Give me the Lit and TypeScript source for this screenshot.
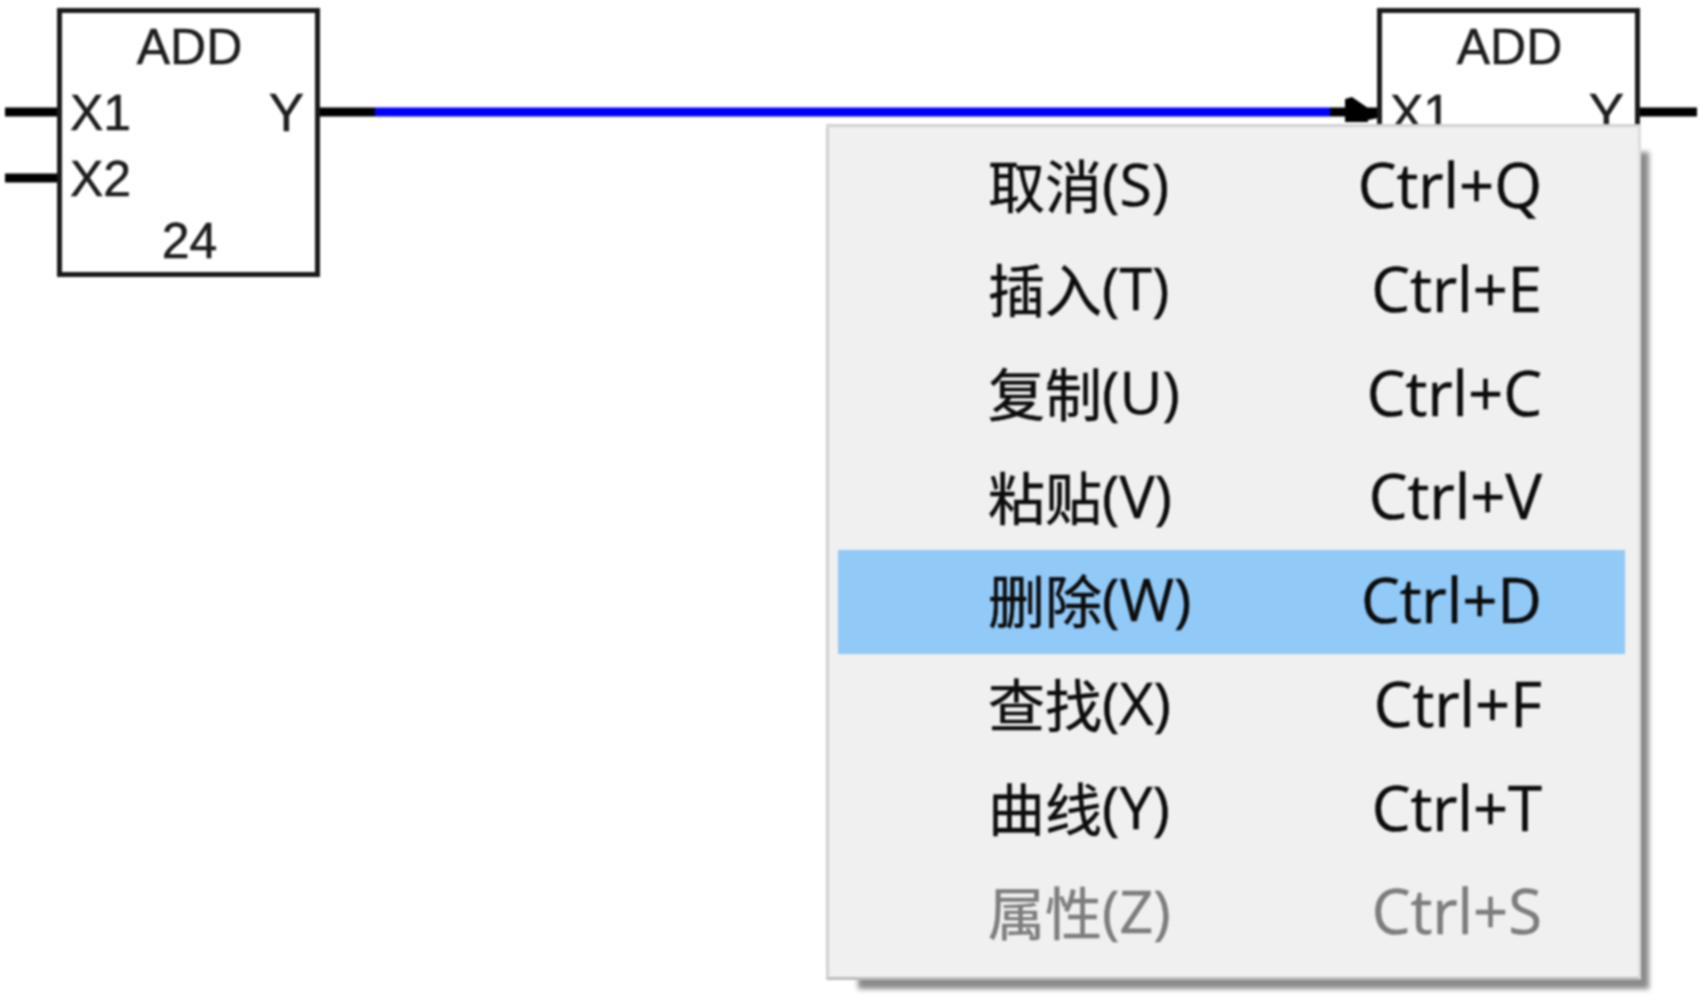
import { LitElement, html, css, svg } from "lit";
import { customElement, property } from "lit/decorators.js";

@customElement("fb-block")
class FbBlock extends LitElement {
  @property() name = "";
  @property() order = "";
  @property({ type: Number }) inputs = 2;
  static styles = css`
    :host { display: block; width: 263px; height: 269px; }
    .box {
      box-sizing: border-box; width: 100%; height: 100%;
      border: 5px solid #1a1a1a; background: #fff; padding: 1px 11px 0 8px;
      display: grid; grid-template-columns: 1fr auto; grid-template-rows: 66px 66px 62px 66px;
      font: 50px/66px "Liberation Sans", Arial, sans-serif; color: #1c1c1c;
      -webkit-text-stroke: 0.5px #1c1c1c;
    }
    .center { grid-column: 1 / -1; text-align: center; padding-left: 5px; }
    .out { font-size: 53px; }
  `;
  render() {
    return html`<div class="box">
      <div class="center">${this.name}</div>
      <div>X1</div><div class="out">Y</div>
      ${this.inputs > 1 ? html`<div>X2</div><div></div>` : html`<div></div><div></div>`}
      <div class="center">${this.order}</div>
    </div>`;
  }
}

const ITEMS = [
  ["取消", "(S)", "Ctrl+Q"],
  ["插入", "(T)", "Ctrl+E"],
  ["复制", "(U)", "Ctrl+C"],
  ["粘贴", "(V)", "Ctrl+V"],
  ["删除", "(W)", "Ctrl+D"],
  ["查找", "(X)", "Ctrl+F"],
  ["曲线", "(Y)", "Ctrl+T"],
  ["属性", "(Z)", "Ctrl+S"],
];

@customElement("context-menu")
class ContextMenu extends LitElement {
  static styles = css`
    :host { display: block; position: absolute; left: 826px; top: 124px; width: 815px; height: 856px; }
    .shadow {
      position: absolute; left: 32px; top: 28px; right: -8px; bottom: -9px;
      background: #8a8a8a; filter: blur(2.5px);
    }
    .menu {
      position: relative; box-sizing: border-box; width: 100%; height: 100%;
      background: #f0f0f0; border: 3px solid #d2d2d2; border-bottom-color: #bdbdbd; border-right-color: #dcdcdc;
      padding: 8px 13px 0 9px;
      font-family: "Open Sans", "Noto Sans CJK SC", sans-serif; color: #0c0c0c;
      -webkit-text-stroke: 0.5px currentColor;
    }
    .row {
      height: 103.75px; box-sizing: border-box; padding: 0 83px 4px 150px;
      display: flex; justify-content: space-between; align-items: center;
      font-size: 61.5px; line-height: 1;
    }
    .row.active { background: #91c9f7; }
    .row.off { color: #7d7d7d; }
    .label { display: flex; align-items: center; padding-bottom: 2px; }
    .cjk { font-family: "Noto Sans CJK SC", sans-serif; font-size: 57px; }
    .mnem { font-size: 59px; }
  `;
  render() {
    return html`<div class="shadow"></div>
      <div class="menu" lang="zh-CN">
        ${ITEMS.map(
          ([t, m, k], i) => html`<div class="row ${i === 4 ? "active" : ""} ${i === 7 ? "off" : ""}">
            <span class="label"><span class="cjk">${t}</span><span class="mnem">${m}</span></span>
            <span>${k}</span>
          </div>`
        )}
      </div>`;
  }
}

@customElement("app-root")
class AppRoot extends LitElement {
  static styles = css`
    :host { display: block; position: relative; width: 1703px; height: 1005px; background: #fff; overflow: hidden; filter: blur(0.9px); }
    svg.wires { position: absolute; inset: 0; width: 100%; height: 100%; }
    fb-block { position: absolute; }
    .a { left: 57px; top: 8px; }
    .b { left: 1377px; top: 8px; }
  `;
  render() {
    return html`
      <svg class="wires" viewBox="0 0 1703 1005">
        ${svg`
          <g fill="#000">
            <rect x="5" y="107.5" width="53" height="9"/>
            <rect x="5" y="173.5" width="53" height="9"/>
            <rect x="320" y="107.5" width="55" height="9"/>
            <rect x="1330" y="107.5" width="48" height="9"/>
            <polygon points="1345,122 1345,99 1352,97 1368,108 1378,110 1378,118 1368,120 1368,122"/>
            <rect x="1640" y="107.5" width="57" height="9"/>
          </g>
          <rect x="375" y="107.5" width="955" height="9" fill="#0000ff"/>
        `}
      </svg>
      <fb-block class="a" name="ADD" order="24"></fb-block>
      <fb-block class="b" name="ADD" inputs="1"></fb-block>
      <context-menu></context-menu>
    `;
  }
}
